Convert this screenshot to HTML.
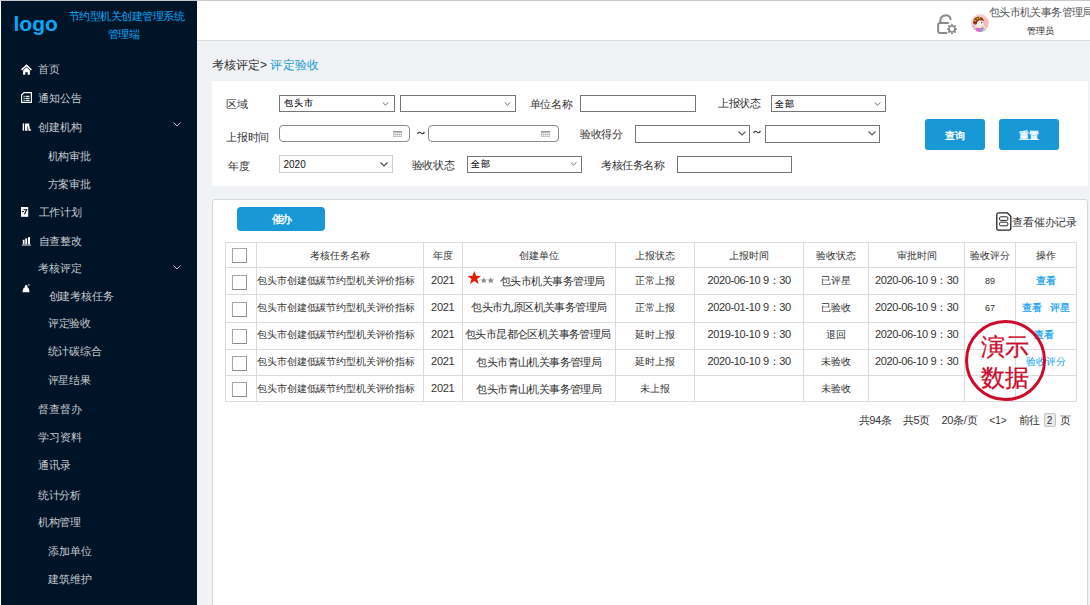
<!DOCTYPE html>
<html><head><meta charset="utf-8"><title>评定验收</title>
<style>
html,body{margin:0;padding:0;}
body{width:1090px;height:605px;overflow:hidden;position:relative;background:#f0f2f5;font-family:"Liberation Sans", sans-serif;}
.t{position:absolute;white-space:nowrap;}
svg{display:block}
</style></head><body>
<div style="position:absolute;left:0;top:0;width:1090px;height:1px;background:#c8c8c8"></div>
<div style="position:absolute;left:0;top:1px;width:1px;height:604px;background:#fff"></div>
<div style="position:absolute;left:1px;top:1px;width:196px;height:604px;box-sizing:border-box;background:#001428"></div>
<div style="position:absolute;left:197px;top:1px;width:893px;height:39px;box-sizing:border-box;background:#fff"></div>
<div style="position:absolute;left:197px;top:40px;width:893px;height:1px;box-sizing:border-box;background:#dcdcdc"></div>
<div class="t" style="left:13.5px;top:9px;font-size:21px;line-height:30px;font-weight:bold;color:#0ba7f3">logo</div>
<div class="t" style="left:68.5px;top:6.3px;font-size:11px;line-height:20px;color:#0ba7f3;letter-spacing:-0.45px;font-weight:normal;">节约型机关创建管理系统</div>
<div class="t" style="left:107.5px;top:23.9px;font-size:11px;line-height:20px;color:#0ba7f3;letter-spacing:-0.45px;font-weight:normal;">管理端</div>
<div class="t" style="left:38.3px;top:59.0px;font-size:11px;line-height:20px;color:#c6c9ce;letter-spacing:-0.2px;font-weight:normal;">首页</div>
<div class="t" style="left:38.3px;top:88.1px;font-size:11px;line-height:20px;color:#c6c9ce;letter-spacing:-0.2px;font-weight:normal;">通知公告</div>
<div class="t" style="left:38.3px;top:116.5px;font-size:11px;line-height:20px;color:#c6c9ce;letter-spacing:-0.2px;font-weight:normal;">创建机构</div>
<div class="t" style="left:47.7px;top:145.7px;font-size:11px;line-height:20px;color:#c6c9ce;letter-spacing:-0.2px;font-weight:normal;">机构审批</div>
<div class="t" style="left:47.5px;top:173.7px;font-size:11px;line-height:20px;color:#c6c9ce;letter-spacing:-0.2px;font-weight:normal;">方案审批</div>
<div class="t" style="left:38.5px;top:202.0px;font-size:11px;line-height:20px;color:#c6c9ce;letter-spacing:-0.2px;font-weight:normal;">工作计划</div>
<div class="t" style="left:38.5px;top:230.7px;font-size:11px;line-height:20px;color:#c6c9ce;letter-spacing:-0.2px;font-weight:normal;">自查整改</div>
<div class="t" style="left:38.2px;top:258.1px;font-size:11px;line-height:20px;color:#c6c9ce;letter-spacing:-0.2px;font-weight:normal;">考核评定</div>
<div class="t" style="left:48.7px;top:285.9px;font-size:11px;line-height:20px;color:#c6c9ce;letter-spacing:-0.2px;font-weight:normal;">创建考核任务</div>
<div class="t" style="left:47.8px;top:313.3px;font-size:11px;line-height:20px;color:#c6c9ce;letter-spacing:-0.2px;font-weight:normal;">评定验收</div>
<div class="t" style="left:47.5px;top:341.3px;font-size:11px;line-height:20px;color:#c6c9ce;letter-spacing:-0.2px;font-weight:normal;">统计碳综合</div>
<div class="t" style="left:47.5px;top:370.2px;font-size:11px;line-height:20px;color:#c6c9ce;letter-spacing:-0.2px;font-weight:normal;">评星结果</div>
<div class="t" style="left:38.3px;top:399.1px;font-size:11px;line-height:20px;color:#c6c9ce;letter-spacing:-0.2px;font-weight:normal;">督查督办</div>
<div class="t" style="left:38.3px;top:426.7px;font-size:11px;line-height:20px;color:#c6c9ce;letter-spacing:-0.2px;font-weight:normal;">学习资料</div>
<div class="t" style="left:38.3px;top:454.7px;font-size:11px;line-height:20px;color:#c6c9ce;letter-spacing:-0.2px;font-weight:normal;">通讯录</div>
<div class="t" style="left:37.8px;top:484.6px;font-size:11px;line-height:20px;color:#c6c9ce;letter-spacing:-0.2px;font-weight:normal;">统计分析</div>
<div class="t" style="left:37.8px;top:511.7px;font-size:11px;line-height:20px;color:#c6c9ce;letter-spacing:-0.2px;font-weight:normal;">机构管理</div>
<div class="t" style="left:48.3px;top:541.1px;font-size:11px;line-height:20px;color:#c6c9ce;letter-spacing:-0.2px;font-weight:normal;">添加单位</div>
<div class="t" style="left:48.3px;top:568.5px;font-size:11px;line-height:20px;color:#c6c9ce;letter-spacing:-0.2px;font-weight:normal;">建筑维护</div>
<svg width="8" height="5" viewBox="0 0 8 5" style="position:absolute;left:172.5px;top:121.5px"><path d="M0.5 0.5 L4 4 L7.5 0.5" fill="none" stroke="#b8bcc2" stroke-width="1"/></svg>
<svg width="8" height="5" viewBox="0 0 8 5" style="position:absolute;left:172.5px;top:265.3px"><path d="M0.5 0.5 L4 4 L7.5 0.5" fill="none" stroke="#b8bcc2" stroke-width="1"/></svg>
<svg width="11" height="11" viewBox="0 0 11 11" style="position:absolute;left:20.7px;top:64px"><path d="M5.5 0.3 L0 5.6 L1.1 6.6 L5.5 2.4 L9.9 6.6 L11 5.6 Z" fill="#fff"/><path d="M2.1 6.4 L5.5 3.3 L8.9 6.4 V10.8 H6.7 V8.2 H4.3 V10.8 H2.1 Z" fill="#fff"/></svg>
<svg width="11" height="11" viewBox="0 0 11 11" style="position:absolute;left:20.6px;top:92.2px"><path d="M3 0.6 H10.4 V10.4 H0.6 V3 Z" fill="none" stroke="#fff" stroke-width="1.2" stroke-linejoin="round"/><rect x="2.6" y="3.8" width="1.1" height="1.1" fill="#fff"/><rect x="4.5" y="3.8" width="4" height="1.1" fill="#fff"/><rect x="2.6" y="5.8" width="1.1" height="1.1" fill="#fff"/><rect x="4.5" y="5.8" width="4" height="1.1" fill="#fff"/><rect x="2.6" y="7.8" width="1.1" height="1.1" fill="#fff"/><rect x="4.5" y="7.8" width="4" height="1.1" fill="#fff"/></svg>
<svg width="10" height="9" viewBox="0 0 10 9" style="position:absolute;left:22px;top:122.5px"><rect x="0.7" y="0.4" width="1.4" height="7.3" fill="#fff"/><path d="M3 0.4 H7.2 V2.6 L7.6 3 V5.6 L8.8 6.2 V7.7 H6.4 V5.8 L6 5.2 V3.2 L5.4 3.2 V7.7 H3 Z" fill="#fff"/></svg>
<svg width="8" height="10" viewBox="0 0 8 10" style="position:absolute;left:21px;top:207.2px"><rect x="0" y="0" width="7.2" height="9.8" fill="#fff"/><path d="M2.4 2.7 H5.7 L3.4 7.2" fill="none" stroke="#001428" stroke-width="1.1"/><path d="M1 4.5 H2.9" stroke="#001428" stroke-width="1"/></svg>
<svg width="10" height="9" viewBox="0 0 10 9" style="position:absolute;left:22px;top:236.5px"><rect x="0.8" y="2.8" width="1.7" height="4.4" fill="#fff"/><rect x="3.3" y="1.4" width="1.8" height="5.8" fill="#fff"/><rect x="6" y="0.2" width="2" height="7" fill="#fff"/><rect x="0" y="7.6" width="9" height="0.9" fill="#fff"/></svg>
<svg width="8" height="9" viewBox="0 0 8 9" style="position:absolute;left:22px;top:283.5px"><path d="M0.6 8.3 C0.4 5.6 1.4 3.8 2.8 3.4 C2.6 2 3.2 1 4.2 1 C5.2 1 5.8 2 5.5 3.4 C6.8 3.9 7.6 5.6 7.4 8.3 Z" fill="#fff"/><rect x="6.2" y="0.2" width="1.4" height="1.4" rx="0.5" fill="#fff"/></svg>
<svg width="22" height="22" viewBox="0 0 22 22" style="position:absolute;left:936px;top:13px"><path d="M4.3 9.8 V7.35 A5.25 5.25 0 0 1 14.6 6.2" fill="none" stroke="#8a8a8a" stroke-width="2" stroke-linecap="round"/><path d="M12 9.9 H4.1 A2 2 0 0 0 2.1 11.9 V18 A2 2 0 0 0 4.1 20 H10.5" fill="none" stroke="#8a8a8a" stroke-width="2" stroke-linecap="round"/><circle cx="16" cy="16" r="3" fill="none" stroke="#8a8a8a" stroke-width="1.7"/><g stroke="#8a8a8a" stroke-width="1.7" stroke-linecap="round"><line x1="16" y1="11.6" x2="16" y2="12.2"/><line x1="16" y1="19.8" x2="16" y2="20.4"/><line x1="11.6" y1="16" x2="12.2" y2="16"/><line x1="19.8" y1="16" x2="20.4" y2="16"/><line x1="12.9" y1="12.9" x2="13.3" y2="13.3"/><line x1="18.7" y1="18.7" x2="19.1" y2="19.1"/><line x1="12.9" y1="19.1" x2="13.3" y2="18.7"/><line x1="18.7" y1="13.3" x2="19.1" y2="12.9"/></g></svg>
<svg width="18" height="18" viewBox="0 0 18 18" style="position:absolute;left:971px;top:14px"><defs><clipPath id="avc"><circle cx="9" cy="9" r="9"/></clipPath></defs><g clip-path="url(#avc)"><rect width="18" height="18" fill="#f6d0d0"/><path d="M12 3 L17 6 L17 14 L13 12 Z" fill="#f3bcbc"/><ellipse cx="8.5" cy="10" rx="3.6" ry="3.4" fill="#f7ece6"/><path d="M2.2 9.8 C1.8 5 4.5 2.6 8 2.8 C11 3 12.8 4.6 12.8 7.6 C11.5 6.4 10 6 8.5 6.3 C7 6.6 6.3 8 5.8 10 C4.8 10.8 3 10.8 2.2 9.8 Z" fill="#8a3b16"/><circle cx="10.6" cy="8.6" r="0.7" fill="#3a2a2a"/><circle cx="4" cy="6.6" r="0.8" fill="#f3d24a"/><circle cx="6.3" cy="4.8" r="0.8" fill="#f3d24a"/><circle cx="8.6" cy="3.9" r="0.8" fill="#f3d24a"/><rect x="5.2" y="14" width="4" height="4" fill="#f25ccc"/><rect x="9" y="14" width="3.4" height="4" fill="#86a3c6"/><circle cx="14.2" cy="16.4" r="1.1" fill="#98c24a"/><circle cx="2.3" cy="12.5" r="0.8" fill="#7b8fc8"/><circle cx="4" cy="14.8" r="0.7" fill="#7b8fc8"/><path d="M10.5 12.5 L12.5 14.5" stroke="#d05a5a" stroke-width="0.8"/></g></svg>
<div class="t" style="left:988.8px;top:2.1px;font-size:11px;line-height:20px;color:#555;letter-spacing:-0.6px;font-weight:normal;">包头市机关事务管理局</div>
<div class="t" style="left:1026.9px;top:20.6px;font-size:9px;line-height:20px;color:#222;letter-spacing:0.1px;font-weight:normal;">管理员</div>
<div class="t" style="left:211.5px;top:55px;font-size:12px;line-height:20px;color:#333;letter-spacing:0.1px">考核评定&gt; <span style="color:#1a9ad6">评定验收</span></div>
<div style="position:absolute;left:212px;top:81px;width:876px;height:105px;box-sizing:border-box;background:#fff"></div>
<div class="t" style="left:226.1px;top:94.2px;font-size:11px;line-height:20px;color:#333;letter-spacing:-0.2px;font-weight:normal;">区域</div>
<div class="t" style="left:226.1px;top:126.7px;font-size:11px;line-height:20px;color:#333;letter-spacing:-0.2px;font-weight:normal;">上报时间</div>
<div class="t" style="left:227.8px;top:155.5px;font-size:11px;line-height:20px;color:#333;letter-spacing:-0.2px;font-weight:normal;">年度</div>
<div class="t" style="left:529.5px;top:94.4px;font-size:11px;line-height:20px;color:#333;letter-spacing:-0.2px;font-weight:normal;">单位名称</div>
<div class="t" style="left:579.8px;top:124.2px;font-size:11px;line-height:20px;color:#333;letter-spacing:-0.2px;font-weight:normal;">验收得分</div>
<div class="t" style="left:717.9px;top:92.6px;font-size:11px;line-height:20px;color:#333;letter-spacing:-0.2px;font-weight:normal;">上报状态</div>
<div class="t" style="left:411.7px;top:154.8px;font-size:11px;line-height:20px;color:#333;letter-spacing:-0.2px;font-weight:normal;">验收状态</div>
<div class="t" style="left:601.1px;top:155.3px;font-size:11px;line-height:20px;color:#333;letter-spacing:-0.4px;font-weight:normal;">考核任务名称</div>
<div style="position:absolute;left:279px;top:95px;width:116px;height:17px;box-sizing:border-box;border:1px solid #767676;border-radius:0px;background:#fff"></div>
<div class="t" style="left:283.5px;top:93.2px;font-size:9px;line-height:20px;color:#000;letter-spacing:1.1px;font-weight:normal;-webkit-text-stroke:0.1px #000">包头市</div>
<svg width="7" height="4" viewBox="0 0 8 5" style="position:absolute;left:382.3px;top:101.8px"><path d="M0.5 0.5 L4 4 L7.5 0.5" fill="none" stroke="#5a5a5a" stroke-width="1.1"/></svg>
<div style="position:absolute;left:400px;top:95px;width:116px;height:17px;box-sizing:border-box;border:1px solid #767676;border-radius:0px;background:#fff"></div>
<svg width="7" height="4" viewBox="0 0 8 5" style="position:absolute;left:503.6px;top:101.8px"><path d="M0.5 0.5 L4 4 L7.5 0.5" fill="none" stroke="#5a5a5a" stroke-width="1.1"/></svg>
<div style="position:absolute;left:580px;top:95px;width:116px;height:17px;box-sizing:border-box;border:1px solid #767676;border-radius:0px;background:#fff"></div>
<div style="position:absolute;left:771px;top:95px;width:115px;height:17px;box-sizing:border-box;border:1px solid #767676;border-radius:0px;background:#fff"></div>
<div class="t" style="left:774.8px;top:93.8px;font-size:9px;line-height:20px;color:#000;letter-spacing:1.1px;font-weight:normal;-webkit-text-stroke:0.1px #000">全部</div>
<svg width="7" height="4" viewBox="0 0 8 5" style="position:absolute;left:873.6px;top:101.8px"><path d="M0.5 0.5 L4 4 L7.5 0.5" fill="none" stroke="#5a5a5a" stroke-width="1.1"/></svg>
<div style="position:absolute;left:279px;top:125px;width:131px;height:17px;box-sizing:border-box;border:1px solid #8a8a8a;border-radius:4px;background:#fff"></div>
<svg width="10" height="6" viewBox="0 0 10 6" style="position:absolute;left:393px;top:131px"><rect x="0" y="0" width="9" height="1.2" fill="#999"/><g fill="none" stroke="#aaa" stroke-width="0.6"><rect x="0.3" y="1.3" width="8.4" height="4.4"/><line x1="2.4" y1="1.3" x2="2.4" y2="5.7"/><line x1="4.5" y1="1.3" x2="4.5" y2="5.7"/><line x1="6.6" y1="1.3" x2="6.6" y2="5.7"/><line x1="0.3" y1="3.5" x2="8.7" y2="3.5"/></g></svg>
<svg width="8" height="4" viewBox="0 0 8 4" style="position:absolute;left:416.6px;top:130.6px"><path d="M0.6 3 C1.5 0.8 3 0.8 4 2 C5 3.2 6.5 3.2 7.4 1" fill="none" stroke="#222" stroke-width="1.1"/></svg>
<div style="position:absolute;left:428px;top:125px;width:131px;height:17px;box-sizing:border-box;border:1px solid #8a8a8a;border-radius:4px;background:#fff"></div>
<svg width="10" height="6" viewBox="0 0 10 6" style="position:absolute;left:541px;top:131px"><rect x="0" y="0" width="9" height="1.2" fill="#999"/><g fill="none" stroke="#aaa" stroke-width="0.6"><rect x="0.3" y="1.3" width="8.4" height="4.4"/><line x1="2.4" y1="1.3" x2="2.4" y2="5.7"/><line x1="4.5" y1="1.3" x2="4.5" y2="5.7"/><line x1="6.6" y1="1.3" x2="6.6" y2="5.7"/><line x1="0.3" y1="3.5" x2="8.7" y2="3.5"/></g></svg>
<div style="position:absolute;left:635px;top:125px;width:115px;height:18px;box-sizing:border-box;border:1px solid #767676;border-radius:0px;background:#fff"></div>
<svg width="8" height="5" viewBox="0 0 8 5" style="position:absolute;left:738px;top:130.6px"><path d="M0.5 0.5 L4 4 L7.5 0.5" fill="none" stroke="#5a5a5a" stroke-width="1.1"/></svg>
<svg width="8" height="4" viewBox="0 0 8 4" style="position:absolute;left:752.6px;top:130.2px"><path d="M0.6 3 C1.5 0.8 3 0.8 4 2 C5 3.2 6.5 3.2 7.4 1" fill="none" stroke="#222" stroke-width="1.1"/></svg>
<div style="position:absolute;left:765px;top:125px;width:115px;height:18px;box-sizing:border-box;border:1px solid #767676;border-radius:0px;background:#fff"></div>
<svg width="8" height="5" viewBox="0 0 8 5" style="position:absolute;left:867.7px;top:130.6px"><path d="M0.5 0.5 L4 4 L7.5 0.5" fill="none" stroke="#5a5a5a" stroke-width="1.1"/></svg>
<div style="position:absolute;left:279px;top:155px;width:114px;height:18px;box-sizing:border-box;border:1px solid #cfcfcf;background:#fff"></div>
<div class="t" style="left:283.5px;top:155.0px;font-size:10px;line-height:20px;color:#111;letter-spacing:0px;font-weight:normal;">2020</div>
<svg width="8" height="5" viewBox="0 0 8 5" style="position:absolute;left:380.4px;top:161.5px"><path d="M0.5 0.5 L4 4 L7.5 0.5" fill="none" stroke="#4a4a4a" stroke-width="1.15"/></svg>
<div style="position:absolute;left:467px;top:156px;width:115px;height:17px;box-sizing:border-box;border:1px solid #767676;border-radius:0px;background:#fff"></div>
<div class="t" style="left:471.0px;top:154.4px;font-size:9px;line-height:20px;color:#000;letter-spacing:1.1px;font-weight:normal;-webkit-text-stroke:0.1px #000">全部</div>
<svg width="7" height="4" viewBox="0 0 8 5" style="position:absolute;left:570.3px;top:161.6px"><path d="M0.5 0.5 L4 4 L7.5 0.5" fill="none" stroke="#5a5a5a" stroke-width="1.1"/></svg>
<div style="position:absolute;left:677px;top:156px;width:115px;height:17px;box-sizing:border-box;border:1px solid #767676;border-radius:0px;background:#fff"></div>
<div style="position:absolute;left:925px;top:119px;width:60px;height:31px;box-sizing:border-box;background:#1899d6;border-radius:3px"></div>
<div class="t" style="left:944.5px;top:126.3px;font-size:10px;line-height:20px;color:#fff;letter-spacing:0px;font-weight:normal;-webkit-text-stroke-width:0.35px">查询</div>
<div style="position:absolute;left:999px;top:119px;width:60px;height:31px;box-sizing:border-box;background:#1899d6;border-radius:3px"></div>
<div class="t" style="left:1019.1px;top:126.3px;font-size:10px;line-height:20px;color:#fff;letter-spacing:0px;font-weight:normal;-webkit-text-stroke-width:0.35px">重置</div>
<div style="position:absolute;left:212px;top:199px;width:876px;height:420px;box-sizing:border-box;background:#fff;border:1px solid #d6d6d6;border-radius:3px"></div>
<div style="position:absolute;left:237px;top:207px;width:88px;height:24px;box-sizing:border-box;background:#1899d6;border-radius:4px"></div>
<div class="t" style="left:271.7px;top:209.2px;font-size:11px;line-height:20px;color:#fff;letter-spacing:-1.5px;font-weight:normal;-webkit-text-stroke-width:0.35px">催办</div>
<svg width="16" height="19" viewBox="0 0 16 19" style="position:absolute;left:995.5px;top:211.5px"><path d="M2.5 0.8 H11.2 L14.8 4.4 V16.4 A1.8 1.8 0 0 1 13 18.2 H2.5 A1.8 1.8 0 0 1 0.8 16.4 V2.5 A1.8 1.8 0 0 1 2.5 0.8 Z" fill="none" stroke="#222" stroke-width="1.3" stroke-linejoin="round"/><rect x="3.6" y="4.8" width="8.2" height="3.6" rx="1" fill="none" stroke="#222" stroke-width="1"/><rect x="3.6" y="10.2" width="8.2" height="3.6" rx="1" fill="none" stroke="#222" stroke-width="1"/></svg>
<div class="t" style="left:1012.2px;top:211.9px;font-size:11px;line-height:20px;color:#333;letter-spacing:-0.2px;font-weight:normal;">查看催办记录</div>
<div style="position:absolute;left:225px;top:242px;width:1px;height:160px;box-sizing:border-box;background:#dcdcdc"></div>
<div style="position:absolute;left:256px;top:242px;width:1px;height:160px;box-sizing:border-box;background:#dcdcdc"></div>
<div style="position:absolute;left:423px;top:242px;width:1px;height:160px;box-sizing:border-box;background:#dcdcdc"></div>
<div style="position:absolute;left:462px;top:242px;width:1px;height:160px;box-sizing:border-box;background:#dcdcdc"></div>
<div style="position:absolute;left:615px;top:242px;width:1px;height:160px;box-sizing:border-box;background:#dcdcdc"></div>
<div style="position:absolute;left:694px;top:242px;width:1px;height:160px;box-sizing:border-box;background:#dcdcdc"></div>
<div style="position:absolute;left:803px;top:242px;width:1px;height:160px;box-sizing:border-box;background:#dcdcdc"></div>
<div style="position:absolute;left:868px;top:242px;width:1px;height:160px;box-sizing:border-box;background:#dcdcdc"></div>
<div style="position:absolute;left:964px;top:242px;width:1px;height:160px;box-sizing:border-box;background:#dcdcdc"></div>
<div style="position:absolute;left:1015px;top:242px;width:1px;height:160px;box-sizing:border-box;background:#dcdcdc"></div>
<div style="position:absolute;left:1076px;top:242px;width:1px;height:160px;box-sizing:border-box;background:#dcdcdc"></div>
<div style="position:absolute;left:225px;top:242px;width:852px;height:1px;box-sizing:border-box;background:#dcdcdc"></div>
<div style="position:absolute;left:225px;top:267px;width:852px;height:1px;box-sizing:border-box;background:#dcdcdc"></div>
<div style="position:absolute;left:225px;top:294px;width:852px;height:1px;box-sizing:border-box;background:#dcdcdc"></div>
<div style="position:absolute;left:225px;top:322px;width:852px;height:1px;box-sizing:border-box;background:#dcdcdc"></div>
<div style="position:absolute;left:225px;top:349px;width:852px;height:1px;box-sizing:border-box;background:#dcdcdc"></div>
<div style="position:absolute;left:225px;top:375px;width:852px;height:1px;box-sizing:border-box;background:#dcdcdc"></div>
<div style="position:absolute;left:225px;top:401px;width:852px;height:1px;box-sizing:border-box;background:#dcdcdc"></div>
<div style="position:absolute;left:232px;top:248px;width:15px;height:15px;box-sizing:border-box;border:1px solid #a6a6a6;border-bottom-color:#8c8c8c;border-right-color:#999;background:#fff"></div>
<div style="position:absolute;left:232px;top:275px;width:15px;height:15px;box-sizing:border-box;border:1px solid #a6a6a6;border-bottom-color:#8c8c8c;border-right-color:#999;background:#fff"></div>
<div style="position:absolute;left:232px;top:302px;width:15px;height:15px;box-sizing:border-box;border:1px solid #a6a6a6;border-bottom-color:#8c8c8c;border-right-color:#999;background:#fff"></div>
<div style="position:absolute;left:232px;top:329px;width:15px;height:15px;box-sizing:border-box;border:1px solid #a6a6a6;border-bottom-color:#8c8c8c;border-right-color:#999;background:#fff"></div>
<div style="position:absolute;left:232px;top:356px;width:15px;height:15px;box-sizing:border-box;border:1px solid #a6a6a6;border-bottom-color:#8c8c8c;border-right-color:#999;background:#fff"></div>
<div style="position:absolute;left:232px;top:382px;width:15px;height:15px;box-sizing:border-box;border:1px solid #a6a6a6;border-bottom-color:#8c8c8c;border-right-color:#999;background:#fff"></div>
<div class="t" style="left:257px;width:166px;text-align:center;top:246.2px;font-size:10px;line-height:20px;color:#333;letter-spacing:0px;font-weight:normal;">考核任务名称</div>
<div class="t" style="left:424px;width:38px;text-align:center;top:246.2px;font-size:10px;line-height:20px;color:#333;letter-spacing:0px;font-weight:normal;">年度</div>
<div class="t" style="left:463px;width:152px;text-align:center;top:246.2px;font-size:10px;line-height:20px;color:#333;letter-spacing:0px;font-weight:normal;">创建单位</div>
<div class="t" style="left:616px;width:78px;text-align:center;top:246.2px;font-size:10px;line-height:20px;color:#333;letter-spacing:0px;font-weight:normal;">上报状态</div>
<div class="t" style="left:695px;width:108px;text-align:center;top:246.2px;font-size:10px;line-height:20px;color:#333;letter-spacing:0px;font-weight:normal;">上报时间</div>
<div class="t" style="left:804px;width:64px;text-align:center;top:246.2px;font-size:10px;line-height:20px;color:#333;letter-spacing:0px;font-weight:normal;">验收状态</div>
<div class="t" style="left:869px;width:95px;text-align:center;top:246.2px;font-size:10px;line-height:20px;color:#333;letter-spacing:0px;font-weight:normal;">审批时间</div>
<div class="t" style="left:965px;width:50px;text-align:center;top:246.2px;font-size:10px;line-height:20px;color:#333;letter-spacing:0px;font-weight:normal;">验收评分</div>
<div class="t" style="left:1016px;width:60px;text-align:center;top:246.2px;font-size:10px;line-height:20px;color:#333;letter-spacing:0px;font-weight:normal;">操作</div>
<div class="t" style="left:257.4px;top:270.5px;font-size:10px;line-height:20px;color:#333;letter-spacing:-0.15px;font-weight:normal;">包头市创建低碳节约型机关评价指标</div>
<div class="t" style="left:423.5px;width:38.5px;text-align:center;top:269.7px;font-size:11px;line-height:20px;color:#333;letter-spacing:-0.3px;font-weight:normal;">2021</div>
<div class="t" style="left:616px;width:78px;text-align:center;top:270.5px;font-size:10px;line-height:20px;color:#333;letter-spacing:0px;font-weight:normal;">正常上报</div>
<div class="t" style="left:695px;width:108.29999999999995px;text-align:center;top:269.8px;font-size:11px;line-height:20px;color:#333;letter-spacing:-0.35px;font-weight:normal;">2020-06-10 9：30</div>
<div class="t" style="left:804px;width:64px;text-align:center;top:270.5px;font-size:10px;line-height:20px;color:#333;letter-spacing:0px;font-weight:normal;">已评星</div>
<div class="t" style="left:869px;width:95.29999999999995px;text-align:center;top:269.8px;font-size:11px;line-height:20px;color:#333;letter-spacing:-0.35px;font-weight:normal;">2020-06-10 9：30</div>
<div class="t" style="left:965px;width:50px;text-align:center;top:271.0px;font-size:9px;line-height:20px;color:#333;letter-spacing:0px;font-weight:normal;">89</div>
<div class="t" style="left:1016px;width:60px;text-align:center;top:270.5px;font-size:10px;line-height:20px;color:#139ff0;letter-spacing:0px;font-weight:normal;-webkit-text-stroke-width:0.25px">查看</div>
<div class="t" style="left:257.4px;top:297.5px;font-size:10px;line-height:20px;color:#333;letter-spacing:-0.15px;font-weight:normal;">包头市创建低碳节约型机关评价指标</div>
<div class="t" style="left:423.5px;width:38.5px;text-align:center;top:296.7px;font-size:11px;line-height:20px;color:#333;letter-spacing:-0.3px;font-weight:normal;">2021</div>
<div class="t" style="left:463px;width:151.5px;text-align:center;top:297.2px;font-size:11px;line-height:20px;color:#333;letter-spacing:-0.6px;font-weight:normal;">包头市九原区机关事务管理局</div>
<div class="t" style="left:616px;width:78px;text-align:center;top:297.5px;font-size:10px;line-height:20px;color:#333;letter-spacing:0px;font-weight:normal;">正常上报</div>
<div class="t" style="left:695px;width:108.29999999999995px;text-align:center;top:296.8px;font-size:11px;line-height:20px;color:#333;letter-spacing:-0.35px;font-weight:normal;">2020-01-10 9：30</div>
<div class="t" style="left:804px;width:64px;text-align:center;top:297.5px;font-size:10px;line-height:20px;color:#333;letter-spacing:0px;font-weight:normal;">已验收</div>
<div class="t" style="left:869px;width:95.29999999999995px;text-align:center;top:296.8px;font-size:11px;line-height:20px;color:#333;letter-spacing:-0.35px;font-weight:normal;">2020-06-10 9：30</div>
<div class="t" style="left:965px;width:50px;text-align:center;top:298.0px;font-size:9px;line-height:20px;color:#333;letter-spacing:0px;font-weight:normal;">67</div>
<div class="t" style="left:1016px;width:60px;text-align:center;top:297.5px;font-size:10px;line-height:20px;color:#139ff0;letter-spacing:0px;font-weight:normal;-webkit-text-stroke-width:0.25px">查看&nbsp;&nbsp;&nbsp;评星</div>
<div class="t" style="left:257.4px;top:324.5px;font-size:10px;line-height:20px;color:#333;letter-spacing:-0.15px;font-weight:normal;">包头市创建低碳节约型机关评价指标</div>
<div class="t" style="left:423.5px;width:38.5px;text-align:center;top:323.7px;font-size:11px;line-height:20px;color:#333;letter-spacing:-0.3px;font-weight:normal;">2021</div>
<div class="t" style="left:462px;width:151.5px;text-align:center;top:324.2px;font-size:11px;line-height:20px;color:#333;letter-spacing:-0.6px;font-weight:normal;">包头市昆都仑区机关事务管理局</div>
<div class="t" style="left:616px;width:78px;text-align:center;top:324.5px;font-size:10px;line-height:20px;color:#333;letter-spacing:0px;font-weight:normal;">延时上报</div>
<div class="t" style="left:695px;width:108.29999999999995px;text-align:center;top:323.8px;font-size:11px;line-height:20px;color:#333;letter-spacing:-0.35px;font-weight:normal;">2019-10-10 9：30</div>
<div class="t" style="left:804px;width:64px;text-align:center;top:324.5px;font-size:10px;line-height:20px;color:#333;letter-spacing:0px;font-weight:normal;">退回</div>
<div class="t" style="left:869px;width:95.29999999999995px;text-align:center;top:323.8px;font-size:11px;line-height:20px;color:#333;letter-spacing:-0.35px;font-weight:normal;">2020-06-10 9：30</div>
<div class="t" style="left:1014px;width:60px;text-align:center;top:324.5px;font-size:10px;line-height:20px;color:#139ff0;letter-spacing:0px;font-weight:normal;-webkit-text-stroke-width:0.25px">查看</div>
<div class="t" style="left:257.4px;top:351.8px;font-size:10px;line-height:20px;color:#333;letter-spacing:-0.15px;font-weight:normal;">包头市创建低碳节约型机关评价指标</div>
<div class="t" style="left:423.5px;width:38.5px;text-align:center;top:351.0px;font-size:11px;line-height:20px;color:#333;letter-spacing:-0.3px;font-weight:normal;">2021</div>
<div class="t" style="left:463px;width:151.5px;text-align:center;top:351.5px;font-size:11px;line-height:20px;color:#333;letter-spacing:-0.6px;font-weight:normal;">包头市青山机关事务管理局</div>
<div class="t" style="left:616px;width:78px;text-align:center;top:351.8px;font-size:10px;line-height:20px;color:#333;letter-spacing:0px;font-weight:normal;">延时上报</div>
<div class="t" style="left:695px;width:108.29999999999995px;text-align:center;top:351.1px;font-size:11px;line-height:20px;color:#333;letter-spacing:-0.35px;font-weight:normal;">2020-10-10 9：30</div>
<div class="t" style="left:804px;width:64px;text-align:center;top:351.8px;font-size:10px;line-height:20px;color:#333;letter-spacing:0px;font-weight:normal;">未验收</div>
<div class="t" style="left:869px;width:95.29999999999995px;text-align:center;top:351.1px;font-size:11px;line-height:20px;color:#333;letter-spacing:-0.35px;font-weight:normal;">2020-06-10 9：30</div>
<div class="t" style="left:1016px;width:60px;text-align:center;top:351.8px;font-size:10px;line-height:20px;color:#139ff0;letter-spacing:0px;font-weight:normal;">验收评分</div>
<div class="t" style="left:257.4px;top:379.0px;font-size:10px;line-height:20px;color:#333;letter-spacing:-0.15px;font-weight:normal;">包头市创建低碳节约型机关评价指标</div>
<div class="t" style="left:423.5px;width:38.5px;text-align:center;top:378.2px;font-size:11px;line-height:20px;color:#333;letter-spacing:-0.3px;font-weight:normal;">2021</div>
<div class="t" style="left:463px;width:151.5px;text-align:center;top:378.7px;font-size:11px;line-height:20px;color:#333;letter-spacing:-0.6px;font-weight:normal;">包头市青山机关事务管理局</div>
<div class="t" style="left:616px;width:78px;text-align:center;top:379.0px;font-size:10px;line-height:20px;color:#333;letter-spacing:0px;font-weight:normal;">未上报</div>
<div class="t" style="left:804px;width:64px;text-align:center;top:379.0px;font-size:10px;line-height:20px;color:#333;letter-spacing:0px;font-weight:normal;">未验收</div>
<svg width="14.6" height="13.6" viewBox="0 0 24 23" preserveAspectRatio="none" style="position:absolute;left:466.6px;top:271.4px"><path d="M12 0 L14.9 8.1 L23.4 8.3 L16.6 13.5 L19.1 21.8 L12 16.9 L4.9 21.8 L7.4 13.5 L0.6 8.3 L9.1 8.1 Z" fill="#e01f00"/></svg>
<svg width="7.6" height="6.8" viewBox="0 0 24 23" preserveAspectRatio="none" style="position:absolute;left:479.6px;top:276.5px"><path d="M12 0 L14.9 8.1 L23.4 8.3 L16.6 13.5 L19.1 21.8 L12 16.9 L4.9 21.8 L7.4 13.5 L0.6 8.3 L9.1 8.1 Z" fill="#8c8c8c"/></svg>
<svg width="7.6" height="6.8" viewBox="0 0 24 23" preserveAspectRatio="none" style="position:absolute;left:486.6px;top:276.5px"><path d="M12 0 L14.9 8.1 L23.4 8.3 L16.6 13.5 L19.1 21.8 L12 16.9 L4.9 21.8 L7.4 13.5 L0.6 8.3 L9.1 8.1 Z" fill="#8c8c8c"/></svg>
<div class="t" style="left:499.7px;top:270.6px;font-size:11px;line-height:20px;color:#333;letter-spacing:-0.5px;font-weight:normal;">包头市机关事务管理局</div>
<div class="t" style="left:858.5px;top:410.2px;font-size:11px;line-height:20px;color:#333;letter-spacing:-0.3px;font-weight:normal;">共94条</div>
<div class="t" style="left:902.8px;top:410.2px;font-size:11px;line-height:20px;color:#333;letter-spacing:-0.3px;font-weight:normal;">共5页</div>
<div class="t" style="left:941.5px;top:410.2px;font-size:11px;line-height:20px;color:#333;letter-spacing:-0.3px;font-weight:normal;">20条/页</div>
<div class="t" style="left:989.3px;top:411.2px;font-size:10px;line-height:20px;color:#333;letter-spacing:0px;font-weight:normal;">&lt;1&gt;</div>
<div class="t" style="left:1018.8px;top:410.2px;font-size:11px;line-height:20px;color:#333;letter-spacing:-0.3px;font-weight:normal;">前往</div>
<div style="position:absolute;left:1044px;top:413px;width:12px;height:14px;box-sizing:border-box;border:1px solid #c4c4c4;border-radius:2px;background:#ececec"></div>
<div class="t" style="left:1046.7px;top:410.8px;font-size:10px;line-height:20px;color:#333;letter-spacing:0px;font-weight:normal;">2</div>
<div class="t" style="left:1060.0px;top:410.2px;font-size:11px;line-height:20px;color:#333;letter-spacing:0px;font-weight:normal;">页</div>
<div style="position:absolute;left:964.5px;top:320px;width:81px;height:81px;box-sizing:border-box;border:3.3px solid #cc0c2c;border-radius:50%"></div>
<div class="t" style="left:981px;top:332px;font-size:24px;line-height:30px;color:#cc0c2c;-webkit-text-stroke:0.3px #cc0c2c">演示</div>
<div class="t" style="left:981px;top:363px;font-size:24px;line-height:30px;color:#cc0c2c;-webkit-text-stroke:0.3px #cc0c2c">数据</div>
</body></html>
